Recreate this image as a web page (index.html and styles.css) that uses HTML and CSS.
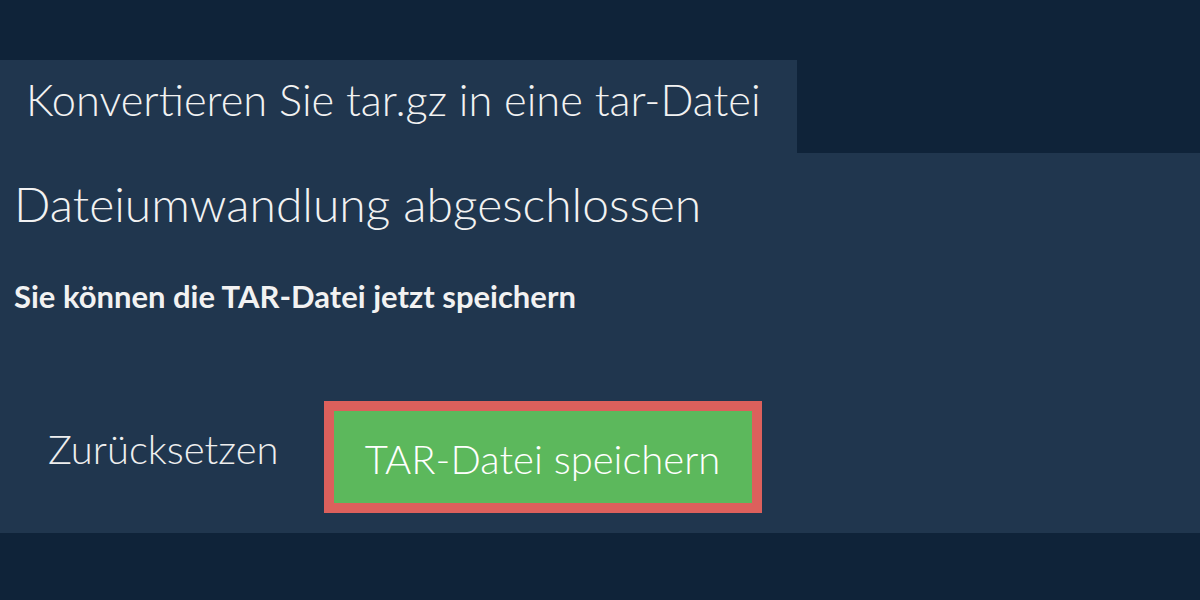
FILE: index.html
```html
<!DOCTYPE html>
<html lang="de">
<head>
  <meta charset="UTF-8">
  <meta name="viewport" content="width=device-width,initial-scale=1">
  <title>tar.gz in tar konvertieren</title>
  <link rel="stylesheet" href="styles.css">
</head>
<body>
  <div class="tabBar">
    <h1 class="tab">Konvertieren Sie tar.gz in eine tar-Datei</h1>
  </div>

  <div class="panel">
    <h2>Dateiumwandlung abgeschlossen</h2>
    <p class="hint">Sie können die TAR-Datei jetzt speichern</p>
    <div class="actions">
      <button class="reset">Zurücksetzen</button>
      <button class="save">TAR-Datei speichern</button>
    </div>
  </div>
</body>
</html>
```

FILE: styles.css
```css
body { margin:0; background:#0f2339; font-family:Lato, "Open Sans", sans-serif; color:#f2f2f2; }
.tabBar { padding-top:60px; display:flex; }
.tab { margin:0; background:#20364e; font-weight:300; font-size:43.4px; line-height:78px; height:78px; padding:0 36px 15px 26px; white-space:nowrap; }
.panel { background:#20364e; height:380px; padding:0 14px; display:flex; flex-direction:column; }
h2 { margin:23px 0 0; font-weight:300; font-size:48px; line-height:56px; }
.hint { margin:46px 0 0; font-weight:700; font-size:31px; line-height:36px; }
.actions { margin-top:87px; display:flex; align-items:center; gap:45px; }
button { font-family:inherit; font-weight:300; font-size:40px; color:#fff; border:0; background:none; cursor:pointer; }
.reset { padding:0 0 16px 34px; color:#eee; }
.save { background:#5cb85c; border:10px solid #dc605c; width:438px; height:112px; padding:3px 0 0; }
```
